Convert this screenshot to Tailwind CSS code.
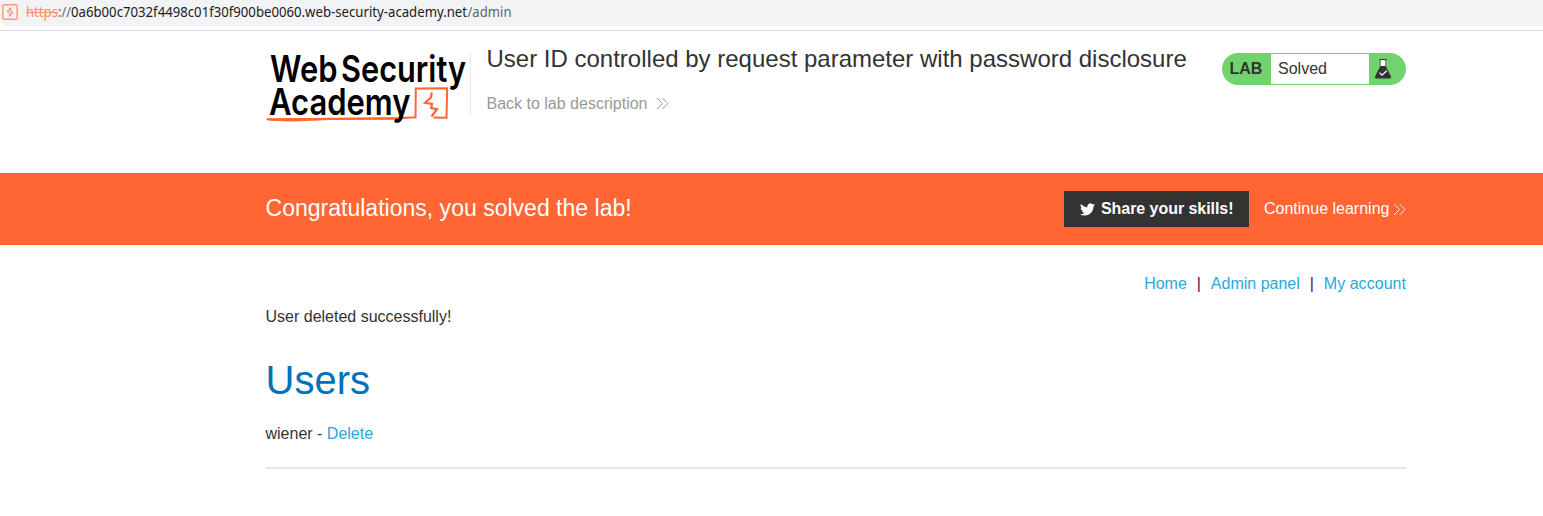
<!DOCTYPE html>
<html lang="en">
<head>
<meta charset="utf-8">
<title>User ID controlled by request parameter with password disclosure</title>
<script src="https://cdn.jsdelivr.net/npm/@tailwindcss/browser@4"></script>
</head>
<body class="bg-white font-['Liberation_Sans',Arial,sans-serif] text-base text-[#333332] h-[516px] overflow-hidden">
  <div class="h-[31px] border-b border-[#dadce0] bg-white">
    <div class="h-[26px] bg-[#f1f3f4] flex items-center rounded-bl-lg pl-[2px] gap-[8px]">
      <svg class="w-4 h-4 -mt-0.5 shrink-0" viewBox="0 0 16 16" fill="none" stroke="#ff9a76" stroke-width="1.500"><rect x=".8" y=".8" width="14.400" height="14.400" rx="1.500"/><path d="M8.800 3.400 5.200 7.500 7.800 8.700M8.200 6.800l2.600 1.400L7.400 12.600M8.700 3.600 8.200 7M7.800 8.700l-.3 3.500" stroke-width="1.200"/></svg>
      <svg class="w-[500px] h-[26px]" viewBox="0 0 500 26" font-family="'Noto Sans',sans-serif" font-size="13.500">
        <text x="0" y="17" textLength="32" lengthAdjust="spacingAndGlyphs" fill="#f98e6c">https</text>
        <path d="M0 12.500h32" stroke="#f98e6c"/>
        <text x="32" y="17" textLength="13" lengthAdjust="spacingAndGlyphs" fill="#5f6368">://</text>
        <text x="45" y="17" textLength="396" lengthAdjust="spacingAndGlyphs" fill="#202124">0a6b00c7032f4498c01f30f900be0060.web-security-academy.net</text>
        <text x="441.500" y="17" textLength="44" lengthAdjust="spacingAndGlyphs" fill="#5f6368">/admin</text>
      </svg>
    </div>
  </div>

  <header class="w-[1141px] ml-[265px] h-[142px] pt-[22px] flex items-start">
    <svg class="w-[205px] h-[75px] shrink-0 overflow-visible" viewBox="265 53 205 75" font-family="Inter,Roboto,sans-serif" font-weight="600" fill="#000">
      <path d="M266.500 119.200 286 119.300 402 118 415.500 117.300 415.800 88.600 447.200 88.200 446.500 117.800 433.500 117.500" fill="none" stroke="#ff6633" stroke-width="2"/>
      <path d="M267 119 290 118.300 396 118.300 394 119.800 330 120 292 121.600 270 120.800z" fill="#ff6633"/>
      <path d="M431.700 92.500 431 97.500 425 102.800 432 104 431.200 108.200 437 109.200 431.500 116.500" fill="none" stroke="#ff6633" stroke-width="2.200"/>
      <text x="270" y="81.500" font-size="36.500" textLength="67.500" lengthAdjust="spacingAndGlyphs">Web</text>
      <text x="341" y="81.500" font-size="36.500" textLength="125" lengthAdjust="spacingAndGlyphs">Security</text>
      <text x="269" y="114.500" font-size="36.500" textLength="141.500" lengthAdjust="spacingAndGlyphs">Academy</text>
    </svg>
    <div class="w-px h-[62px] bg-[#e6e6e6] shrink-0"></div>
    <div class="ml-[15.500px] flex-1 -mt-[8px]">
      <h2 class="text-2xl leading-7 whitespace-nowrap">User ID controlled by request parameter with password disclosure</h2>
      <a class="mt-[19px] flex items-center text-[#999999] leading-6">Back to lab description
        <svg class="ml-[8.500px] -mt-px w-[13px] h-[13px]" viewBox="0 0 13 13" fill="none" stroke="#999999"><path d="M1 1l5.500 5.500L1 12M6.500 1 12 6.500 6.500 12"/></svg>
      </a>
    </div>
    <div class="w-[184px] h-8 rounded-full bg-[#72d36e] flex items-center py-px overflow-hidden shrink-0">
      <span class="w-[49px] pl-[7.500px] font-bold leading-[30px]">LAB</span>
      <span class="w-[98px] h-[30px] leading-[30px] bg-white pl-[7px]">Solved</span>
      <svg class="ml-[5px] w-[18px] h-[22px]" viewBox="0 0 18 22"><path d="M6.500 2h5v7h-5z" fill="#fff"/><path d="M5.300 1.600h7.400" stroke="#333332" stroke-width="1"/><path d="M6.300 2v6.500M11.700 2v6.500" fill="none" stroke="#333332" stroke-width=".6"/><path d="M6.300 8h5.400l5.300 10.500q.5 2-1.200 2H2.200q-1.700 0-1.200-2z" fill="#333332"/><path d="m5.500 14.700 2.500 2.500 4.700-4.400" fill="none" stroke="#fff" stroke-width="1.200"/></svg>
    </div>
  </header>

  <section class="h-[72px] bg-[#ff6633] text-white">
    <div class="w-[1141px] ml-[265px] h-full flex items-center">
      <h4 class="flex-1 pl-[0.500px] text-[23.040px] leading-7 -mt-[2px]">Congratulations, you solved the lab!</h4>
      <button class="w-[185px] h-9 bg-[#333332] flex items-center pl-[16px] font-bold whitespace-nowrap tracking-[-0.050px]">
        <svg class="w-[15px] h-[15px] mr-[6px] shrink-0" viewBox="0 1.500 24 21" fill="#fff"><path d="M23.953 4.570a10 10 0 01-2.825.775 4.958 4.958 0 002.163-2.723c-.951.555-2.005.959-3.127 1.184a4.920 4.920 0 00-8.384 4.482C7.690 8.095 4.067 6.130 1.640 3.162a4.822 4.822 0 00-.666 2.475c0 1.710.870 3.213 2.188 4.096a4.904 4.904 0 01-2.228-.616v.060a4.923 4.923 0 003.946 4.827 4.996 4.996 0 01-2.212.085 4.936 4.936 0 004.604 3.417 9.867 9.867 0 01-6.102 2.105c-.390 0-.779-.023-1.170-.067a13.995 13.995 0 007.557 2.209c9.053 0 13.998-7.496 13.998-13.985 0-.210 0-.420-.015-.630A9.935 9.935 0 0024 4.590z"/></svg>Share your skills!
      </button>
      <a class="ml-[15px] w-[142px] flex items-center justify-between whitespace-nowrap">Continue learning
        <svg class="w-[13px] h-[13px]" viewBox="0 0 13 13" fill="none" stroke="#fff" stroke-width=".8"><path d="M1 1l5.500 5.500L1 12M6.500 1 12 6.500 6.500 12"/></svg>
      </a>
    </div>
  </section>

  <main class="w-[1141px] ml-[265px] pt-[27px]">
    <nav class="flex justify-end leading-6 text-[#29a7df]">
      <a>Home</a><span class="w-[24px] text-center text-[#5a1240]">|</span><a>Admin panel</a><span class="w-[24px] text-center text-[#5a1240]">|</span><a class="tracking-[0.040px]">My account</a>
    </nav>
    <p class="mt-[9px] pl-[0.500px] leading-6">User deleted successfully!</p>
    <h1 class="mt-[27px] pl-[0.500px] text-[40px] leading-[48px] text-[#0071ba]">Users</h1>
    <div class="mt-[18px] pl-[0.500px] leading-6">wiener - <a class="text-[#29a7df]">Delete</a></div>
    <hr class="mt-[21px] ml-[0.500px] border-0 h-[2px] bg-[#e6e6e6]">
  </main>
</body>
</html>
